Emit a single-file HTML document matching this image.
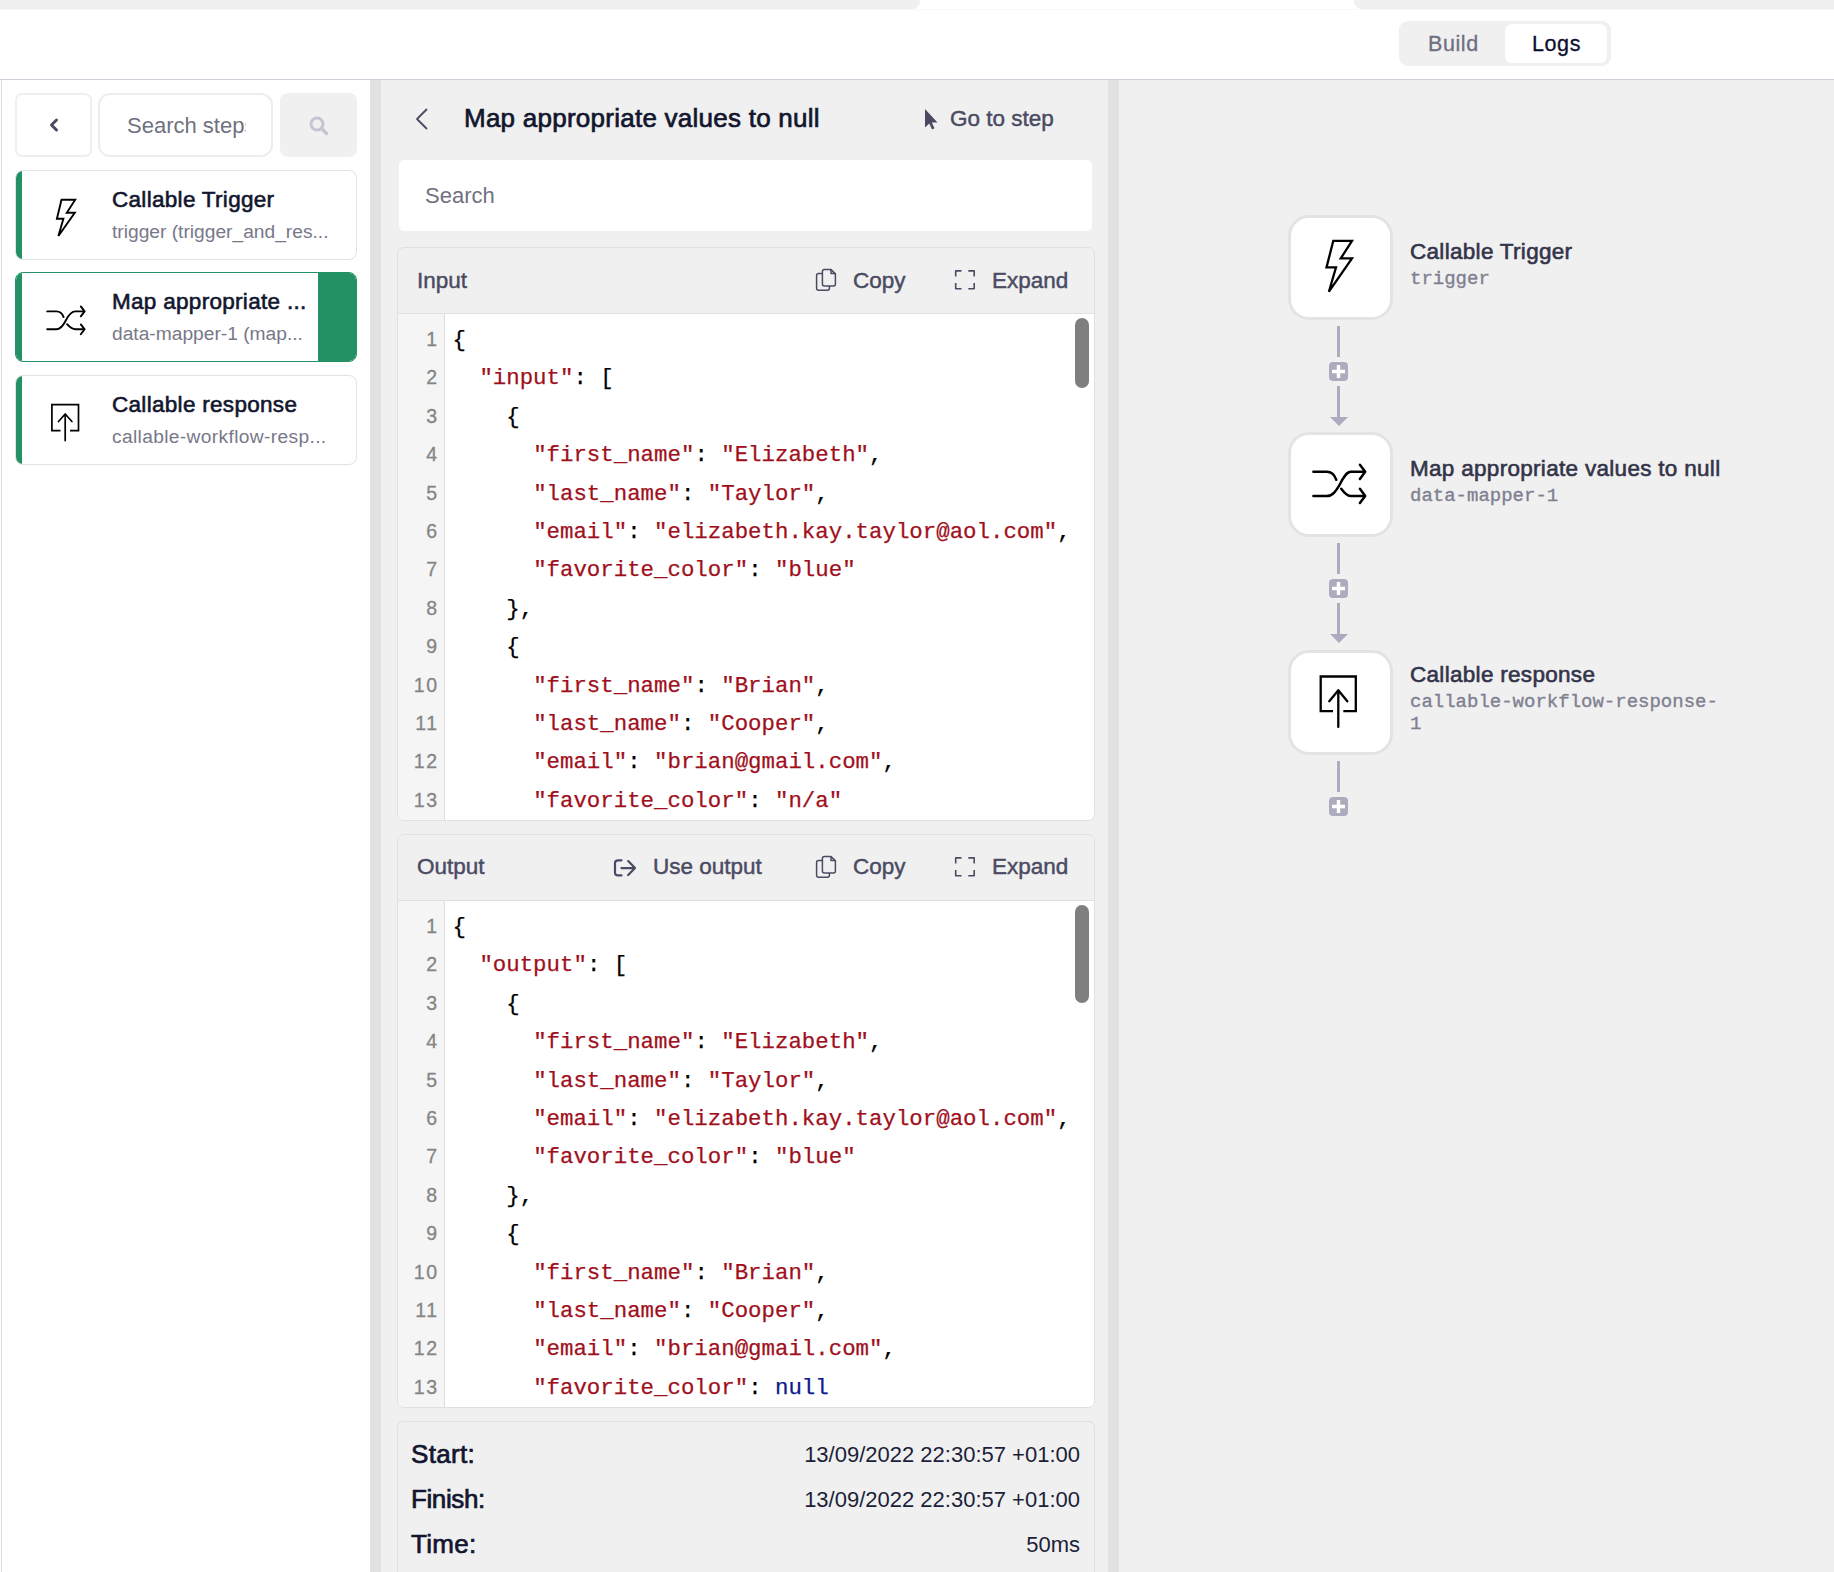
<!DOCTYPE html>
<html><head><meta charset="utf-8">
<style>
*{box-sizing:border-box;margin:0;padding:0}
html,body{width:1834px;height:1572px;overflow:hidden;background:#fff;font-family:"Liberation Sans",sans-serif}
.abs{position:absolute}
#topline{left:0;top:9px;width:1834px;height:1px;background:#f8f8f8}
#topL{left:0;top:0;width:920px;height:9px;background:#f0f0f0;border-bottom-right-radius:8px}
#topR{left:1354px;top:0;width:480px;height:9px;background:#f0f0f0;border-bottom-left-radius:8px}
#hdrline{left:0;top:79px;width:1834px;height:1px;background:#cfcfdc}
#toggle{left:1399px;top:21px;width:212px;height:45px;background:#f0f0f0;border-radius:9px}
#logs{left:1505px;top:24px;width:102px;height:39px;background:#fff;border-radius:7px}
.tg{font-size:21.5px;line-height:23px;top:33px;letter-spacing:0.6px;-webkit-text-stroke:0.3px currentColor;white-space:nowrap}
#left{left:0;top:80px;width:370px;height:1492px;background:#fff}
#leftline{left:1px;top:80px;width:1px;height:1492px;background:#dcdce4}
#div1{left:370px;top:80px;width:11px;height:1492px;background:#e2e2e2}
#mid{left:381px;top:80px;width:727px;height:1492px;background:#f0f0f0}
#div2{left:1108px;top:80px;width:11px;height:1492px;background:#e2e2e2}
#right{left:1119px;top:80px;width:715px;height:1492px;background:#f0f0f0}
.btnback{left:15px;top:93px;width:77px;height:64px;border:2.5px solid #efefef;border-radius:7px;background:#fff}
.sinput{left:98px;top:93px;width:175px;height:64px;border:2.5px solid #ededed;border-radius:12px;background:#fff;overflow:hidden}
.sbtn{left:280px;top:93px;width:77px;height:64px;background:#f0f0f0;border-radius:8px}
.card{left:15px;width:342px;height:90px;border:1px solid #e2e2e2;border-radius:8px;background:#fff;overflow:hidden}
.card .bar{position:absolute;left:-1px;top:-1px;bottom:-1px;width:7px;background:#239164}
.card .t{position:absolute;left:96px;font-size:22.5px;letter-spacing:0.3px;-webkit-text-stroke:0.6px #12162e;color:#12162e;white-space:nowrap}
.card .s{position:absolute;left:96px;font-size:19.2px;color:#777889;white-space:nowrap}
.panel{left:397px;width:698px;border:1px solid #e0e0e0;border-radius:7px;background:#f0f0f0;overflow:hidden}
.phdr{position:absolute;left:0;top:0;right:0;height:66px;border-bottom:1px solid #e0e0e0}
.code{position:absolute;left:0;right:0;bottom:0;background:#fff}
.gutter{position:absolute;left:0;top:0;bottom:0;width:47px;background:#f5f5f5;border-right:1px solid #dddddd}
.ln{position:absolute;left:0;width:40.5px;letter-spacing:1.5px;margin-top:-1px;font-size:19.5px;line-height:38.4px;color:#858585;text-align:right;-webkit-text-stroke:0.3px #858585}
.cl{position:absolute;left:54.5px;-webkit-text-stroke:0.25px currentColor;font-family:"Liberation Mono",monospace;font-size:22.4px;line-height:38.4px;white-space:pre;color:#000}
.k{color:#a0101c}
.n{color:#0d1a8a}
.thumb{position:absolute;width:14px;border-radius:7px;background:#7f7f7f}
.htxt{position:absolute;font-size:22.5px;color:#4a4b63;white-space:nowrap;-webkit-text-stroke:0.45px #4a4b63}
.node{left:1288px;width:105px;height:105px;border:3px solid #e3e3e3;border-radius:21px;background:#fff}
.nt{left:1410px;font-size:22.5px;letter-spacing:0.3px;-webkit-text-stroke:0.6px #33344a;color:#33344a;white-space:nowrap}
.ns{left:1410px;font-family:"Liberation Mono",monospace;font-size:19px;color:#7f8091;-webkit-text-stroke:0.35px #7f8091;white-space:nowrap;line-height:23.6px}
.vl{left:1337px;width:3px;background:#adacbf}
.plus{left:1329px;width:19px;height:19px;border-radius:4px;background:#adacbf}
.foot{left:397px;top:1421px;width:698px;height:160px;border:1px solid #e0e0e0;border-radius:6px;background:#f0f0f0}
.fl{position:absolute;left:13px;font-size:26px;letter-spacing:0.3px;-webkit-text-stroke:0.7px #12162e;color:#12162e}
.fv{position:absolute;right:14px;font-size:22px;color:#1c1f38}
</style></head><body>

<div class="abs" id="topline"></div>
<div class="abs" id="topL"></div>
<div class="abs" id="topR"></div>
<div class="abs" id="hdrline"></div>
<div class="abs" id="toggle"></div>
<div class="abs" id="logs"></div>
<div class="abs tg" style="left:1428px;color:#6e6f80">Build</div>
<div class="abs tg" style="left:1532px;color:#0b0f2e">Logs</div>

<div class="abs" id="left"></div>
<div class="abs" id="leftline"></div>
<div class="abs btnback"></div>
<svg class="abs" style="left:46px;top:117px" width="16" height="16" viewBox="0 0 16 16"><path d="M10.5 3 L5.5 8 L10.5 13" fill="none" stroke="#4a4b63" stroke-width="3" stroke-linecap="round" stroke-linejoin="round"/></svg>
<div class="abs sinput"><div style="position:absolute;left:27px;top:0;width:119px;height:60px;overflow:hidden"><div style="position:absolute;left:0;top:18px;font-size:22px;color:#70717f;white-space:nowrap">Search steps</div></div></div>
<div class="abs sbtn"></div>
<svg class="abs" style="left:307px;top:114px" width="24" height="24" viewBox="0 0 24 24"><circle cx="10" cy="10" r="6" fill="none" stroke="#c5c5d0" stroke-width="3"/><path d="M14.5 14.5 L19.5 19.5" stroke="#c5c5d0" stroke-width="3.4" stroke-linecap="round"/></svg>
<div class="abs card" style="top:170px"><div class="bar"></div>
<div class="t" style="top:16px">Callable Trigger</div>
<div class="s" style="top:50px">trigger (trigger_and_res...</div>
</div>
<div class="abs card" style="top:272px;border-color:#239164"><div class="bar"></div>
<div style="position:absolute;right:-1px;top:-1px;bottom:-1px;width:39px;background:#239164"></div>
<div class="t" style="top:16px">Map appropriate ...</div>
<div class="s" style="top:50px">data-mapper-1 (map...</div>
</div>
<div class="abs card" style="top:375px"><div class="bar"></div>
<div class="t" style="top:16px">Callable response</div>
<div class="s" style="top:50px;letter-spacing:0.35px">callable-workflow-resp...</div>
</div>
<div class="abs" id="div1"></div>
<div class="abs" id="mid"></div>
<div class="abs" id="div2"></div>
<div class="abs" id="right"></div>

<svg class="abs" style="left:410px;top:106px" width="24" height="26" viewBox="0 0 24 26"><path d="M16.5 3.5 L7 13 L16.5 22.5" fill="none" stroke="#4a4b63" stroke-width="1.8" stroke-linecap="round" stroke-linejoin="round"/></svg>
<div class="abs" style="left:464px;top:103px;font-size:26px;letter-spacing:0.25px;-webkit-text-stroke:0.7px #12162e;color:#12162e;white-space:nowrap">Map appropriate values to null</div>
<svg class="abs" style="left:921px;top:106px" width="20" height="26" viewBox="0 0 20 26"><path d="M4 3 L4 21.5 L8.3 17.5 L11 23.5 L13.5 22.3 L10.8 16.5 L16.5 16.5 Z" fill="#4a4b63"/></svg>
<div class="abs htxt" style="left:950px;top:106px">Go to step</div>
<div class="abs" style="left:399px;top:160px;width:693px;height:71px;background:#fff;border-radius:5px"></div>
<div class="abs" style="left:425px;top:183px;font-size:22px;color:#707080">Search</div>
<div class="abs panel" style="top:247px;height:574px"><div class="phdr"><div class="htxt" style="left:19px;top:20px">Input</div><svg style="position:absolute;left:416px;top:19px" width="24" height="26" viewBox="0 0 24 26"><g fill="none" stroke="#4a4b63" stroke-width="1.5" stroke-linejoin="round"><path d="M8.4 4.5 Q8.4 2.5 10.4 2.5 L17 2.5 L21.4 6.9 L21.4 16.9 Q21.4 18.9 19.4 18.9 L10.4 18.9 Q8.4 18.9 8.4 16.9 Z"/><path d="M17 2.5 L17 6.4 L21.4 6.4"/><path d="M8.4 6.6 L4.6 6.6 Q2.6 6.6 2.6 8.6 L2.6 21.3 Q2.6 23.3 4.6 23.3 L13.4 23.3 Q15.4 23.3 15.4 21.3 L15.4 18.9"/></g></svg><div class="htxt" style="left:455px;top:20px">Copy</div><svg style="position:absolute;left:555px;top:20px" width="24" height="24" viewBox="0 0 24 24"><path d="M2.7 8.4 L2.7 2.9 L8.5 2.9 M15.3 2.9 L21.2 2.9 L21.2 8.4 M21.2 14.9 L21.2 20.7 L15.3 20.7 M8.5 20.7 L2.7 20.7 L2.7 14.9" fill="none" stroke="#4a4b63" stroke-width="1.6" stroke-linecap="butt" stroke-linejoin="round"/></svg><div class="htxt" style="left:594px;top:20px">Expand</div></div>
<div class="code" style="top:66px"><div class="gutter"></div>
<div class="ln" style="top:7.0px">1</div><div class="cl" style="top:7.0px">{</div>
<div class="ln" style="top:45.4px">2</div><div class="cl" style="top:45.4px">  <span class="k">"input"</span>: [</div>
<div class="ln" style="top:83.8px">3</div><div class="cl" style="top:83.8px">    {</div>
<div class="ln" style="top:122.2px">4</div><div class="cl" style="top:122.2px">      <span class="k">"first_name"</span>: <span class="k">"Elizabeth"</span>,</div>
<div class="ln" style="top:160.6px">5</div><div class="cl" style="top:160.6px">      <span class="k">"last_name"</span>: <span class="k">"Taylor"</span>,</div>
<div class="ln" style="top:199.0px">6</div><div class="cl" style="top:199.0px">      <span class="k">"email"</span>: <span class="k">"elizabeth.kay.taylor@aol.com"</span>,</div>
<div class="ln" style="top:237.4px">7</div><div class="cl" style="top:237.4px">      <span class="k">"favorite_color"</span>: <span class="k">"blue"</span></div>
<div class="ln" style="top:275.8px">8</div><div class="cl" style="top:275.8px">    },</div>
<div class="ln" style="top:314.2px">9</div><div class="cl" style="top:314.2px">    {</div>
<div class="ln" style="top:352.6px">10</div><div class="cl" style="top:352.6px">      <span class="k">"first_name"</span>: <span class="k">"Brian"</span>,</div>
<div class="ln" style="top:391.0px">11</div><div class="cl" style="top:391.0px">      <span class="k">"last_name"</span>: <span class="k">"Cooper"</span>,</div>
<div class="ln" style="top:429.4px">12</div><div class="cl" style="top:429.4px">      <span class="k">"email"</span>: <span class="k">"brian@gmail.com"</span>,</div>
<div class="ln" style="top:467.8px">13</div><div class="cl" style="top:467.8px">      <span class="k">"favorite_color"</span>: <span class="k">"n/a"</span></div>
<div class="thumb" style="left:677px;top:4px;height:70px"></div></div></div>
<div class="abs panel" style="top:834px;height:574px"><div class="phdr"><div class="htxt" style="left:19px;top:19px">Output</div><svg style="position:absolute;left:215px;top:21.5px" width="26" height="22" viewBox="0 0 26 22"><path d="M8.5 3.3 L5 3.3 Q2 3.3 2 6.3 L2 15.4 Q2 18.4 5 18.4 L8.5 18.4" fill="none" stroke="#4a4b63" stroke-width="2.2" stroke-linecap="round"/><path d="M8.5 11.1 L21.5 11.1 M15.2 4.1 L22 11.1 L15.2 18.1" fill="none" stroke="#4a4b63" stroke-width="2.2" stroke-linecap="round" stroke-linejoin="round"/></svg><div class="htxt" style="left:255px;top:19px">Use output</div><svg style="position:absolute;left:416px;top:19px" width="24" height="26" viewBox="0 0 24 26"><g fill="none" stroke="#4a4b63" stroke-width="1.5" stroke-linejoin="round"><path d="M8.4 4.5 Q8.4 2.5 10.4 2.5 L17 2.5 L21.4 6.9 L21.4 16.9 Q21.4 18.9 19.4 18.9 L10.4 18.9 Q8.4 18.9 8.4 16.9 Z"/><path d="M17 2.5 L17 6.4 L21.4 6.4"/><path d="M8.4 6.6 L4.6 6.6 Q2.6 6.6 2.6 8.6 L2.6 21.3 Q2.6 23.3 4.6 23.3 L13.4 23.3 Q15.4 23.3 15.4 21.3 L15.4 18.9"/></g></svg><div class="htxt" style="left:455px;top:19px">Copy</div><svg style="position:absolute;left:555px;top:20px" width="24" height="24" viewBox="0 0 24 24"><path d="M2.7 8.4 L2.7 2.9 L8.5 2.9 M15.3 2.9 L21.2 2.9 L21.2 8.4 M21.2 14.9 L21.2 20.7 L15.3 20.7 M8.5 20.7 L2.7 20.7 L2.7 14.9" fill="none" stroke="#4a4b63" stroke-width="1.6" stroke-linecap="butt" stroke-linejoin="round"/></svg><div class="htxt" style="left:594px;top:19px">Expand</div></div>
<div class="code" style="top:66px"><div class="gutter"></div>
<div class="ln" style="top:7.0px">1</div><div class="cl" style="top:7.0px">{</div>
<div class="ln" style="top:45.4px">2</div><div class="cl" style="top:45.4px">  <span class="k">"output"</span>: [</div>
<div class="ln" style="top:83.8px">3</div><div class="cl" style="top:83.8px">    {</div>
<div class="ln" style="top:122.2px">4</div><div class="cl" style="top:122.2px">      <span class="k">"first_name"</span>: <span class="k">"Elizabeth"</span>,</div>
<div class="ln" style="top:160.6px">5</div><div class="cl" style="top:160.6px">      <span class="k">"last_name"</span>: <span class="k">"Taylor"</span>,</div>
<div class="ln" style="top:199.0px">6</div><div class="cl" style="top:199.0px">      <span class="k">"email"</span>: <span class="k">"elizabeth.kay.taylor@aol.com"</span>,</div>
<div class="ln" style="top:237.4px">7</div><div class="cl" style="top:237.4px">      <span class="k">"favorite_color"</span>: <span class="k">"blue"</span></div>
<div class="ln" style="top:275.8px">8</div><div class="cl" style="top:275.8px">    },</div>
<div class="ln" style="top:314.2px">9</div><div class="cl" style="top:314.2px">    {</div>
<div class="ln" style="top:352.6px">10</div><div class="cl" style="top:352.6px">      <span class="k">"first_name"</span>: <span class="k">"Brian"</span>,</div>
<div class="ln" style="top:391.0px">11</div><div class="cl" style="top:391.0px">      <span class="k">"last_name"</span>: <span class="k">"Cooper"</span>,</div>
<div class="ln" style="top:429.4px">12</div><div class="cl" style="top:429.4px">      <span class="k">"email"</span>: <span class="k">"brian@gmail.com"</span>,</div>
<div class="ln" style="top:467.8px">13</div><div class="cl" style="top:467.8px">      <span class="k">"favorite_color"</span>: <span class="n">null</span></div>
<div class="thumb" style="left:677px;top:4px;height:98px"></div></div></div>
<div class="abs foot">
<div class="fl" style="top:17px">Start:</div><div class="fv" style="top:20px">13/09/2022 22:30:57 +01:00</div>
<div class="fl" style="top:62px;letter-spacing:-0.4px">Finish:</div><div class="fv" style="top:65px">13/09/2022 22:30:57 +01:00</div>
<div class="fl" style="top:107px">Time:</div><div class="fv" style="top:110px">50ms</div>
</div>

<div class="abs node" style="top:215px"></div>
<div class="abs nt" style="top:239px">Callable Trigger</div>
<div class="abs ns" style="top:268px">trigger</div>
<div class="abs vl" style="top:326px;height:31px"></div>
<div class="abs plus" style="top:362px"></div>
<div class="abs vl" style="top:386px;height:34px"></div>
<svg class="abs" style="left:1329px;top:416px" width="20" height="11" viewBox="0 0 20 11"><path d="M1 1 L19 1 L10 10 Z" fill="#adacbf"/></svg>
<div class="abs node" style="top:432px"></div>
<div class="abs nt" style="top:456px">Map appropriate values to null</div>
<div class="abs ns" style="top:485px">data-mapper-1</div>
<div class="abs vl" style="top:543px;height:31px"></div>
<div class="abs plus" style="top:579px"></div>
<div class="abs vl" style="top:603px;height:34px"></div>
<svg class="abs" style="left:1329px;top:633px" width="20" height="11" viewBox="0 0 20 11"><path d="M1 1 L19 1 L10 10 Z" fill="#adacbf"/></svg>
<div class="abs node" style="top:650px"></div>
<div class="abs nt" style="top:662px">Callable response</div>
<div class="abs ns" style="top:690.5px;line-height:22.6px;width:312px;white-space:normal;word-break:break-all">callable-workflow-response-1</div>
<div class="abs vl" style="top:761px;height:31px"></div>
<div class="abs plus" style="top:797px"></div>

<svg class="abs" style="left:0;top:0;pointer-events:none" width="1834" height="1572" viewBox="0 0 1834 1572">
<g fill="none" stroke="#000" stroke-linecap="round" stroke-linejoin="round">
<path d="M61.5 199.7 L75.2 199.7 L66.8 212.7 L74.8 212.7 L58.4 236 L63.4 218.8 L56.9 218.8 Z" stroke-width="1.9" stroke-linejoin="miter" stroke-linecap="butt"/>
<path d="M1333.3 240.8 L1352 240.8 L1340.8 258.3 L1352 258.3 L1328.9 291.7 L1336 267.4 L1326.5 267.4 Z" stroke-width="2.3" stroke-linejoin="miter" stroke-linecap="butt"/>
<g stroke-width="1.9">
<path d="M47.2 311.4 L56.4 311.4 C59.5 311.4 62 313 63.6 317.1"/>
<path d="M47.2 329.3 L56.4 329.3 C61 329.3 63.5 325 65.8 320.5 C68.5 315 71 311.4 75.5 311.4 L84.3 311.4"/>
<path d="M80.8 306.4 L84.6 311.4 L80.8 316.3"/>
<path d="M67.1 324.2 C69.5 327 72 329.3 75.5 329.3 L84.3 329.3"/>
<path d="M80.8 324.4 L84.6 329.3 L80.8 334.3"/>
</g>
<g stroke-width="2.5">
<path d="M1313.4 471.8 L1326.7 471.8 C1331 471.8 1334.5 474.5 1336.3 479.8"/>
<path d="M1313.4 496.1 L1326.7 496.1 C1333 496.1 1336.5 490 1339.5 485 C1343.5 477 1346.5 471.8 1351 471.8 L1364.8 471.8"/>
<path d="M1359.9 464.7 L1365.2 471.8 L1359.9 478.9"/>
<path d="M1341.2 488.7 C1344 492.5 1347 496.1 1351 496.1 L1364.8 496.1"/>
<path d="M1359.9 488.7 L1365.2 496.1 L1359.9 503"/>
</g>
<path d="M60.5 430.6 L51.9 430.6 L51.9 404.7 L78.5 404.7 L78.5 430.6 L70 430.6" stroke-width="1.7" stroke-linecap="butt" stroke-linejoin="miter"/>
<path d="M65.2 440.6 L65.2 414.2 M58.5 421.5 L65.2 414 L71.9 421.5" stroke-width="1.7"/>
<path d="M1333 711.1 L1320.7 711.1 L1320.7 676.5 L1355.8 676.5 L1355.8 711.1 L1343.3 711.1" stroke-width="2.3" stroke-linecap="butt" stroke-linejoin="miter"/>
<path d="M1338.3 726.9 L1338.3 691.3 M1329.3 701.3 L1338.3 690.2 L1347.3 701.3" stroke-width="2.3"/>
</g>
<g stroke="#fff" stroke-width="3.4" stroke-linecap="butt">
<path d="M1332 371.5 L1345 371.5 M1338.5 365 L1338.5 378"/>
<path d="M1332 588.5 L1345 588.5 M1338.5 582 L1338.5 595"/>
<path d="M1332 806.5 L1345 806.5 M1338.5 800 L1338.5 813"/>
</g>
</svg>
</body></html>
